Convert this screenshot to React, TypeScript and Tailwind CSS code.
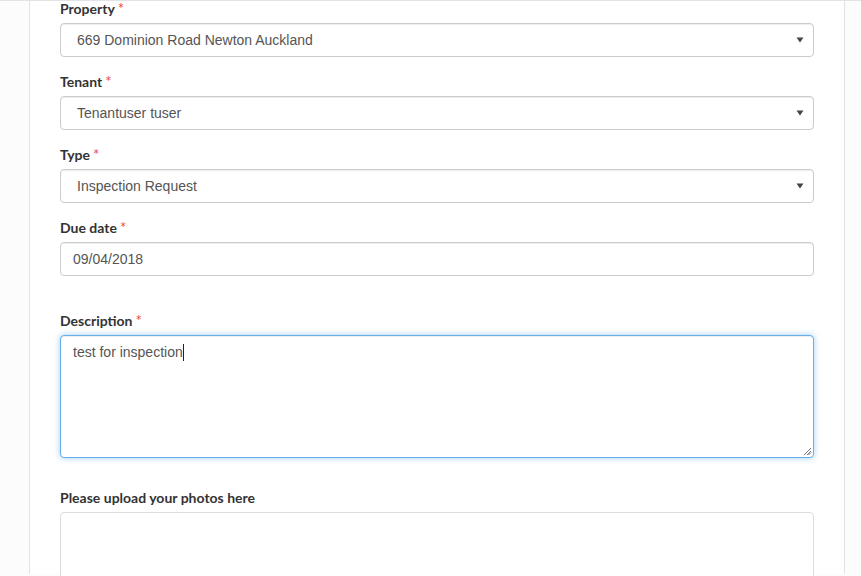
import React from "react";

const Label = ({ text, required = true, className = "" }: { text: string; required?: boolean; className?: string }) => (
  <div className={`h-[19px] leading-[19px] text-[14px] font-bold text-[#333] ${className}`} style={{ fontFamily: "Lato, 'Open Sans', sans-serif" }}>
    {text}
    {required && <span className="ml-[3px] text-[15px] text-[#e8464a] font-normal">*</span>}
  </div>
);

const SelectBox = ({ value }: { value: string }) => (
  <div className="mt-[5px] h-[34px] rounded-[4px] border border-[#ccc] bg-white flex items-center pl-[16px] pr-[8px] shadow-[inset_0_1px_1px_rgba(0,0,0,0.075)]">
    <span className="flex-1 text-[14px] text-[#555]" style={{ fontFamily: "'Liberation Sans', Arial, sans-serif" }}>{value}</span>
    <svg width="8" height="6" viewBox="0 0 8 6" className="mr-[1px]">
      <path d="M0.5 0.5 L7.5 0.5 L4 5.5 Z" fill="#444" />
    </svg>
  </div>
);

export default function App() {
  return (
    <div className="w-[861px] h-[576px] overflow-hidden bg-[#fcfcfc] border-t border-[#e3e3e3]">
      <div className="ml-[29px] w-[816px] h-full bg-white border-x border-[#e3e3e3] px-[30px] pt-0">
        <div className="-mt-[2px]">
          <Label text="Property" />
          <SelectBox value="669 Dominion Road Newton Auckland" />

          <Label text="Tenant" className="mt-[15px]" />
          <SelectBox value="Tenantuser tuser" />

          <Label text="Type" className="mt-[15px]" />
          <SelectBox value="Inspection Request" />

          <Label text="Due date" className="mt-[15px]" />
          <div className="mt-[5px] h-[34px] rounded-[4px] border border-[#ccc] bg-white flex items-center pl-[12px] shadow-[inset_0_1px_1px_rgba(0,0,0,0.075)]">
            <span className="text-[14px] text-[#555]" style={{ fontFamily: "'Liberation Sans', Arial, sans-serif" }}>09/04/2018</span>
          </div>

          <Label text="Description" className="mt-[35px]" />
          <div className="relative mt-[5px] h-[123px] rounded-[4px] border border-[#66afe9] bg-white px-[12px] pt-[6px] leading-[20px] shadow-[inset_0_1px_1px_rgba(0,0,0,0.075),0_0_6px_rgba(102,175,233,0.6)]">
            <div className="flex items-center h-[20px]">
              <span className="text-[14px] leading-[20px] text-[#555]" style={{ fontFamily: "'Liberation Sans', Arial, sans-serif" }}>
                test for inspection
              </span>
              <span className="block w-px h-[17px] bg-[#222]" />
            </div>
            <svg width="9" height="9" viewBox="0 0 9 9" className="absolute right-[1px] bottom-[1px]">
              <path d="M8 1 L1 8 M8 4 L4 8" stroke="#777" strokeWidth="1" />
              <path d="M8 5.5 L5.5 8" stroke="#777" strokeWidth="1" />
            </svg>
          </div>

          <Label text="Please upload your photos here" required={false} className="mt-[30px]" />
          <div className="mt-[5px] h-[120px] rounded-[4px] border border-[#ddd] bg-white" />
        </div>
      </div>
    </div>
  );
}
